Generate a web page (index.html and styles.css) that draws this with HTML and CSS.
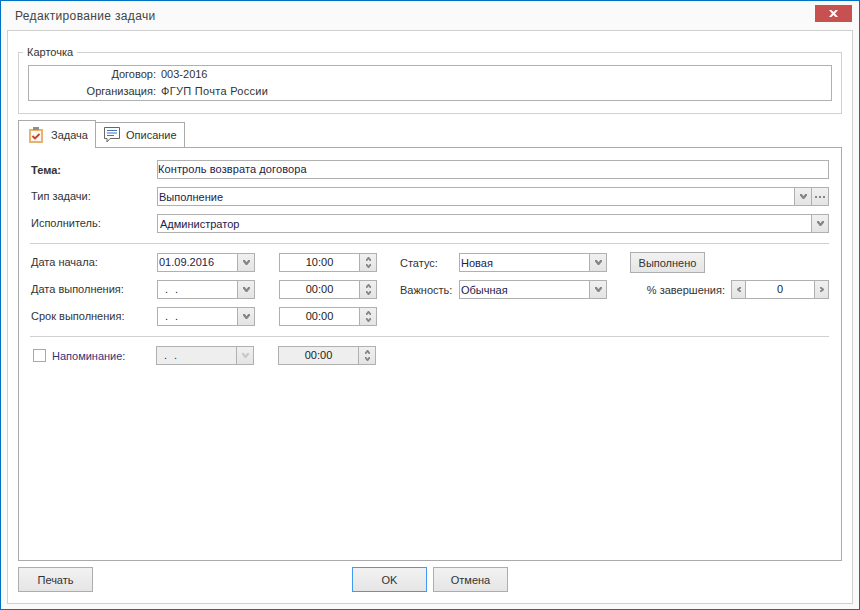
FILE: index.html
```html
<!DOCTYPE html>
<html lang="ru">

<head>
  <meta charset="UTF-8" />
  <title>Редактирование задачи</title>
  <link rel="stylesheet" href="styles.css">
</head>

<body>
  <svg class="icon-defs" width="0" height="0">
    <symbol id="chev-down" viewBox="0 0 7 5"><path d="M0 0h1.8l1.7 2.2L5.2 0H7v1.4L4.2 5H2.8L0 1.4z" /></symbol>
    <symbol id="chev-up" viewBox="0 0 5 4"><path d="M2 0h1l2 2.4V4H3.8L2.5 2.3 1.2 4H0V2.4z" /></symbol>
    <symbol id="chev-small-down" viewBox="0 0 5 4"><path d="M0 0h1.2l1.3 1.7L3.8 0H5v1.6L3 4H2L0 1.6z" /></symbol>
    <symbol id="chev-left" viewBox="0 0 4 5"><path d="M4 0v1.2L2.3 2.5 4 3.8V5H2.6L0 3V2l2.6-2z" /></symbol>
    <symbol id="chev-right" viewBox="0 0 4 5"><path d="M0 0v1.2l1.7 1.3L0 3.8V5h1.4L4 3V2L1.4 0z" /></symbol>
  </svg>

  <div class="window">
    <div class="titlebar">
      <span class="title">Редактирование задачи</span>
      <button class="close-button">
        <svg width="9" height="7" viewBox="0 0 9 7"><path d="M0 0h2.4l2.1 2 2.1-2H9L6 3.5 9 7H6.6L4.5 5 2.4 7H0l3-3.5z" fill="#fff" /></svg>
      </button>
    </div>

    <div class="panel">
      <fieldset class="card-group">
        <legend class="card-legend">Карточка</legend>
        <div class="card-box">
          <span class="card-label">Договор:</span><span>003-2016</span>
          <span class="card-label">Организация:</span><span class="card-org">ФГУП Почта России</span>
        </div>
      </fieldset>

      <div class="tabs">
        <div class="tab tab-active">
          <svg class="tab-icon" width="14" height="16" viewBox="0 0 14 16">
            <rect x="1" y="3" width="12" height="12" fill="#fbf7f0" stroke="#e6b46e" stroke-width="2" />
            <rect x="4" y="0" width="6" height="3" fill="#8d8d8d" />
            <path d="M3.5 9l2.5 2.5L10.5 7" fill="none" stroke="#c4402f" stroke-width="1.8" />
          </svg>
          Задача
        </div>
        <div class="tab">
          <svg class="tab-icon" width="16" height="16" viewBox="0 0 16 16">
            <path d="M.5.5h15v11H6l-3 3.5v-3.5H.5z" fill="#fff" stroke="#666" />
            <path d="M3 3.5h10M3 6h10M3 8.5h7" stroke="#3f74b5" />
          </svg>
          Описание
        </div>
      </div>

      <div class="tab-panel">
        <div class="main-rows">
          <div class="row">
            <span class="row-label label-bold">Тема:</span>
            <div class="field field-wide"><span class="field-text subject-text">Контроль возврата договора</span></div>
          </div>
          <div class="row">
            <span class="row-label">Тип задачи:</span>
            <div class="field field-wide">
              <span class="field-text combo-text">Выполнение</span>
              <span class="field-button"><svg class="chev" width="7" height="5"><use href="#chev-down" /></svg></span>
              <span class="field-button">
                <svg class="chev" width="10" height="2" viewBox="0 0 10 2"><path d="M0 0h2v2H0zM4 0h2v2H4zM8 0h2v2H8z" /></svg>
              </span>
            </div>
          </div>
          <div class="row">
            <span class="row-label">Исполнитель:</span>
            <div class="field field-wide">
              <span class="field-text combo-text owner-text">Администратор</span>
              <span class="field-button"><svg class="chev" width="7" height="5"><use href="#chev-down" /></svg></span>
            </div>
          </div>
        </div>

        <div class="divider"></div>

        <div class="schedule">
          <span class="row-label">Дата начала:</span>
          <div class="field col-date">
            <span class="field-text">01.09.2016</span>
            <span class="field-button"><svg class="chev" width="7" height="5"><use href="#chev-down" /></svg></span>
          </div>
          <div class="field col-time">
            <span class="field-text text-center">10:00</span>
            <span class="field-button spin"><svg class="chev" width="5" height="4"><use href="#chev-up" /></svg><svg class="chev" width="5" height="4"><use href="#chev-small-down" /></svg></span>
          </div>
          <span class="col-status-label">Статус:</span>
          <div class="field col-status">
            <span class="field-text combo-text">Новая</span>
            <span class="field-button"><svg class="chev" width="7" height="5"><use href="#chev-down" /></svg></span>
          </div>
          <button class="button col-extra button-done">Выполнено</button>

          <span class="row-label">Дата выполнения:</span>
          <div class="field col-date">
            <span class="field-text date-empty">. .</span>
            <span class="field-button"><svg class="chev" width="7" height="5"><use href="#chev-down" /></svg></span>
          </div>
          <div class="field col-time">
            <span class="field-text text-center">00:00</span>
            <span class="field-button spin"><svg class="chev" width="5" height="4"><use href="#chev-up" /></svg><svg class="chev" width="5" height="4"><use href="#chev-small-down" /></svg></span>
          </div>
          <span class="col-status-label">Важность:</span>
          <div class="field col-status">
            <span class="field-text combo-text">Обычная</span>
            <span class="field-button"><svg class="chev" width="7" height="5"><use href="#chev-down" /></svg></span>
          </div>
          <div class="col-extra percent">
            <span>% завершения:</span>
            <div class="field percent-field">
              <span class="field-button button-left"><svg class="chev" width="4" height="5"><use href="#chev-left" /></svg></span>
              <span class="field-text text-center">0</span>
              <span class="field-button"><svg class="chev" width="4" height="5"><use href="#chev-right" /></svg></span>
            </div>
          </div>

          <span class="row-label">Срок выполнения:</span>
          <div class="field col-date">
            <span class="field-text date-empty">. .</span>
            <span class="field-button"><svg class="chev" width="7" height="5"><use href="#chev-down" /></svg></span>
          </div>
          <div class="field col-time">
            <span class="field-text text-center">00:00</span>
            <span class="field-button spin"><svg class="chev" width="5" height="4"><use href="#chev-up" /></svg><svg class="chev" width="5" height="4"><use href="#chev-small-down" /></svg></span>
          </div>
        </div>

        <div class="divider"></div>

        <div class="reminder">
          <span class="checkbox"></span>
          <span class="reminder-label">Напоминание:</span>
          <div class="field field-date field-disabled">
            <span class="field-text date-empty">. .</span>
            <span class="field-button"><svg class="chev chev-disabled" width="7" height="5"><use href="#chev-down" /></svg></span>
          </div>
          <div class="field field-time field-disabled">
            <span class="field-text text-center">00:00</span>
            <span class="field-button spin"><svg class="chev" width="5" height="4"><use href="#chev-up" /></svg><svg class="chev" width="5" height="4"><use href="#chev-small-down" /></svg></span>
          </div>
        </div>
      </div>

      <div class="footer">
        <button class="button">Печать</button>
        <button class="button button-ok">OK</button>
        <button class="button">Отмена</button>
      </div>
    </div>
  </div>
</body>

</html>
```

FILE: styles.css
```css
/* Base Reset */
* {
  margin: 0;
  padding: 0;
  box-sizing: border-box;
}

body {
  background-color: #fff;
  font-family: 'Liberation Sans', Arial, sans-serif;
  font-size: 11px;
  color: #333;
}

.icon-defs {
  position: absolute;
}

/* Window Frame */
.window {
  width: 860px;
  height: 610px;
  border: 1px solid #0072c6;
  background-color: #fafafa;
  display: flex;
  flex-direction: column;
}

.titlebar {
  height: 29px;
  padding: 0 7px 0 14px;
  display: flex;
  justify-content: space-between;
  align-items: center;
  flex-shrink: 0;
}

.title {
  font-size: 12px;
  letter-spacing: 0.35px;
  color: #444;
}

.close-button {
  width: 37px;
  height: 17px;
  margin-top: -5px;
  border: none;
  background-color: #c75050;
  display: flex;
  align-items: center;
  justify-content: center;
}

.panel {
  flex: 1;
  margin: 0 6px 5px 6px;
  padding: 14px 10px 11px 10px;
  border: 1px solid #d0d0d0;
  background-color: #fff;
  display: flex;
  flex-direction: column;
}

/* Card Group */
.card-group {
  border: 1px solid #d0d0d0;
  padding: 6px 9px 12px 9px;
  min-width: 0;
}

.card-legend {
  margin-left: -5px;
  padding: 0 4px;
  height: 14px;
  line-height: 14px;
}

.card-box {
  height: 36px;
  border: 1px solid #b0b0b0;
  display: grid;
  grid-template-columns: 127px 1fr;
  grid-template-rows: 16px 16px;
  column-gap: 5px;
  row-gap: 1px;
  align-items: center;
}

.card-label {
  text-align: right;
}

.card-org {
  letter-spacing: 0.3px;
}

/* Tabs */
.tabs {
  height: 27px;
  margin-top: 6px;
  display: flex;
  align-items: flex-end;
  flex-shrink: 0;
}

.tab {
  width: 89px;
  height: 25px;
  padding-left: 8px;
  border: 1px solid #aaa;
  border-left: none;
  border-bottom: none;
  display: flex;
  align-items: center;
  gap: 6px;
}

.tab-active {
  position: relative;
  width: 78px;
  height: 28px;
  margin-bottom: -1px;
  padding-left: 10px;
  border-left: 1px solid #aaa;
  background-color: #fff;
  gap: 8px;
}

.tab-panel {
  flex: 1;
  padding: 12px 12px 0 12px;
  border: 1px solid #aaa;
}

/* Form Rows */
.main-rows {
  display: flex;
  flex-direction: column;
  gap: 8px;
}

.row {
  height: 19px;
  display: flex;
  align-items: center;
}

.row-label {
  grid-column: 1;
  width: 126px;
  flex-shrink: 0;
  padding-bottom: 2px;
}

.label-bold {
  font-weight: bold;
  padding-bottom: 0;
}

.divider {
  height: 1px;
  margin: 10px 0 9px -1px;
  background-color: #d0d0d0;
}

/* Fields */
.field {
  height: 19px;
  border: 1px solid #b0b0b0;
  background-color: #fff;
  display: flex;
  align-items: stretch;
  color: #22224a;
  line-height: 17px;
}

.field-wide {
  flex: 1;
}

.field-text {
  flex: 1;
  min-width: 0;
  padding-left: 1px;
  white-space: nowrap;
}

.subject-text {
  padding-left: 0;
  letter-spacing: 0.1px;
}

.combo-text {
  padding-top: 1px;
}

.owner-text {
  padding-left: 2px;
}

.text-center {
  text-align: center;
  padding-left: 0;
  color: #222;
}

.date-empty {
  padding-left: 7px;
  letter-spacing: 2px;
}

.field-button {
  width: 17px;
  flex-shrink: 0;
  border-left: 1px solid #b0b0b0;
  background: linear-gradient(#f0f0f0, #e4e4e4);
  display: flex;
  align-items: center;
  justify-content: center;
}

.button-left {
  border-left: none;
  border-right: 1px solid #b0b0b0;
  width: 14px;
}

.spin {
  flex-direction: column;
  gap: 3px;
}

.chev {
  fill: #858585;
  display: block;
}

.chev-disabled {
  fill: #c8c8c8;
}

/* Schedule Grid */
.schedule {
  display: grid;
  grid-template-columns: 126px 98px 24px 98px 23px 59px 148px 23px 1fr;
  grid-auto-rows: 19px;
  row-gap: 8px;
  align-items: center;
}

.col-date {
  grid-column: 2;
}

.col-time {
  grid-column: 4;
}

.col-status-label {
  grid-column: 6;
}

.col-status {
  grid-column: 7;
}

.col-extra {
  grid-column: 9;
}

.percent {
  display: flex;
  justify-content: flex-end;
  align-items: center;
  gap: 6px;
}

.percent-field {
  width: 98px;
}

.percent-field .field-button:last-child {
  width: 14px;
}

/* Reminder Row */
.reminder {
  display: flex;
  align-items: center;
  height: 19px;
}

.checkbox {
  width: 13px;
  height: 13px;
  margin-left: 2px;
  border: 1px solid #a8a8a8;
  background-color: #fff;
}

.reminder-label {
  width: 104px;
  margin-left: 6px;
  color: #33337a;
}

.field-date {
  width: 98px;
}

.field-time {
  width: 98px;
  margin-left: 24px;
}

.field-disabled,
.field-disabled .field-text {
  background-color: #eee;
}

/* Buttons */
.button {
  width: 75px;
  height: 25px;
  border: 1px solid #adadad;
  background: linear-gradient(#f2f2f2, #e5e5e5);
  font-family: inherit;
  font-size: 11px;
  color: #333;
}

.button-done {
  height: 21px;
}

.button-ok {
  border-color: #3f9bf0;
}

.footer {
  margin-top: 6px;
  display: flex;
  gap: 6px;
  flex-shrink: 0;
}

.footer .button-ok {
  margin-left: 253px;
}
```
